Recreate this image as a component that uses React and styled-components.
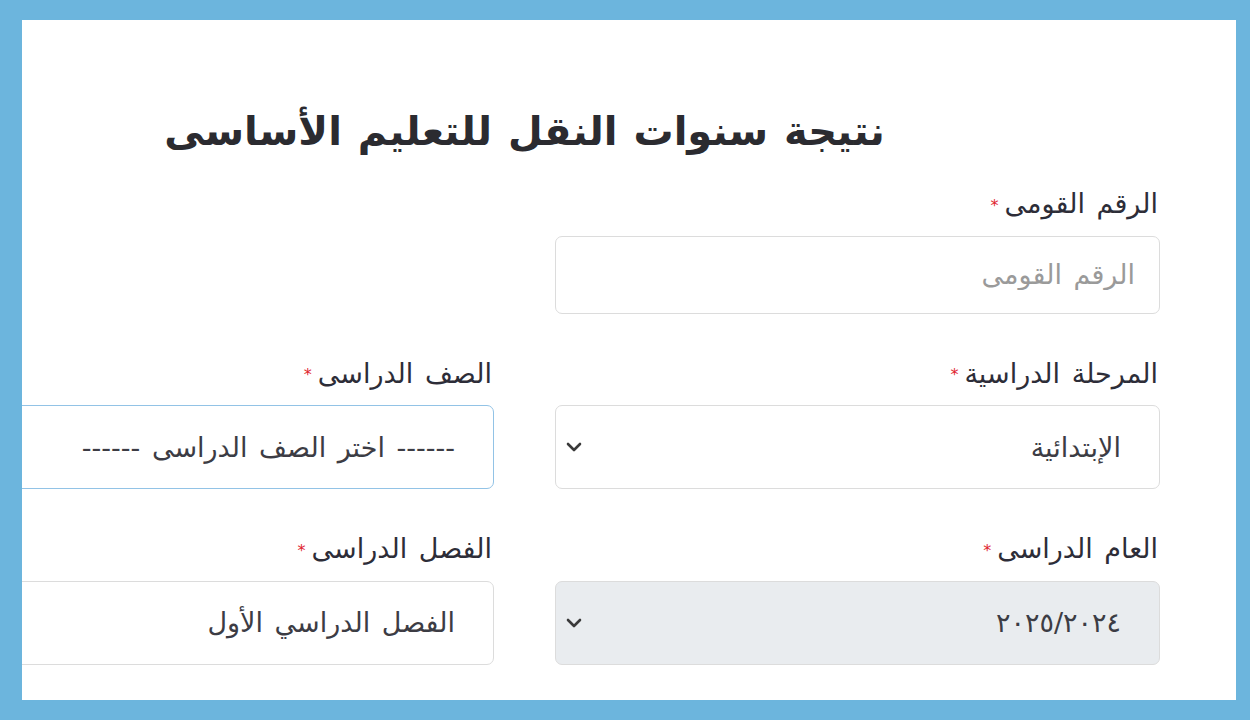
import React from "react";
import styled, { createGlobalStyle } from "styled-components";

const GlobalStyle = createGlobalStyle`
  html, body {
    margin: 0;
    padding: 0;
    background: #6cb5dd;
  }
  * {
    box-sizing: border-box;
  }
`;

const FONT = `"DejaVu Sans", "Noto Sans Arabic", sans-serif`;

const Frame = styled.div`
  height: 720px;
  padding: 20px 14px 20px 22px;
`;

const Panel = styled.div`
  height: 680px;
  background: #ffffff;
  overflow: hidden;
  direction: rtl;
  display: flex;
  padding-right: 76px;
  font-family: ${FONT};
`;

const Form = styled.div`
  width: 1271px;
  flex-shrink: 0;
  padding-top: 83px;
`;

const Title = styled.h2`
  margin: 0 0 27px;
  text-align: center;
  font-size: 40px;
  line-height: 56px;
  font-weight: 700;
  word-spacing: 2px;
  color: #2b2b30;
`;

const Grid = styled.div`
  display: grid;
  grid-template-columns: 605px 605px;
  column-gap: 61px;
  row-gap: 42px;
`;

const Field = styled.div`
  display: flex;
  flex-direction: column;
`;

const Label = styled.label`
  font-size: 27px;
  line-height: 36px;
  word-spacing: 3px;
  color: #2d2d38;
  margin-bottom: 12px;
  padding-right: 2px;
`;

const Star = styled.span`
  color: #e0262f;
  font-size: 16px;
  margin-right: 6px;
  vertical-align: middle;
`;

const Input = styled.input`
  height: 78px;
  width: 100%;
  border: 1.5px solid #dcdcdc;
  border-radius: 7px;
  padding: 0 24px;
  font-family: ${FONT};
  font-size: 27px;
  word-spacing: 3px;
  color: #444;
  outline: none;
  &::placeholder {
    color: #9a9a9a;
  }
`;

const SelectBox = styled.div`
  height: 84px;
  display: flex;
  align-items: center;
  justify-content: space-between;
  padding: 0 38px 0 10px;
  border: 1.5px solid ${(p) => (p.$focused ? "#92c3e6" : "#dcdcdc")};
  border-radius: 7px;
  background: ${(p) => (p.$disabled ? "#e9ecef" : "#ffffff")};
  font-size: 27px;
  word-spacing: 3px;
  color: #3c3c44;
  white-space: nowrap;
`;

const Chevron = styled.svg`
  width: 16px;
  height: 10px;
  flex-shrink: 0;
`;

const Spacer = styled.div``;

const Arrow = () => (
  <Chevron viewBox="0 0 16 10">
    <path d="M2 2 L8 8 L14 2" fill="none" stroke="#3a3a3a" strokeWidth="2.6" strokeLinecap="round" strokeLinejoin="round" />
  </Chevron>
);

const Select = ({ value, focused, disabled }) => (
  <SelectBox $focused={focused} $disabled={disabled}>
    <span>{value}</span>
    <Arrow />
  </SelectBox>
);

const FieldLabel = ({ children }) => (
  <Label>
    {children}
    <Star>*</Star>
  </Label>
);

export default function App() {
  return (
    <>
      <GlobalStyle />
      <Frame>
        <Panel>
          <Form>
            <Title>نتيجة سنوات النقل للتعليم الأساسى</Title>
            <Grid>
              <Field>
                <FieldLabel>الرقم القومى</FieldLabel>
                <Input placeholder="الرقم القومى" />
              </Field>
              <Spacer />
              <Field>
                <FieldLabel>المرحلة الدراسية</FieldLabel>
                <Select value="الإبتدائية" />
              </Field>
              <Field>
                <FieldLabel>الصف الدراسى</FieldLabel>
                <Select value="------ اختر الصف الدراسى ------" focused />
              </Field>
              <Field>
                <FieldLabel>العام الدراسى</FieldLabel>
                <Select value="٢٠٢٥/٢٠٢٤" disabled />
              </Field>
              <Field>
                <FieldLabel>الفصل الدراسى</FieldLabel>
                <Select value="الفصل الدراسي الأول" />
              </Field>
            </Grid>
          </Form>
        </Panel>
      </Frame>
    </>
  );
}
